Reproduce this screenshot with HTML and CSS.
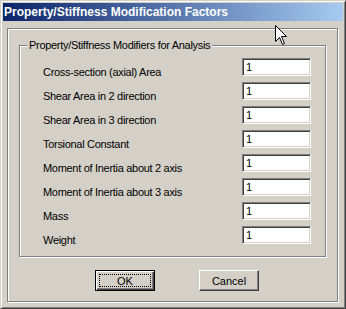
FILE: index.html
```html
<!DOCTYPE html>
<html>
<head>
<meta charset="utf-8">
<title>Property/Stiffness Modification Factors</title>
<link rel="stylesheet" href="styles.css">
</head>
<body>
<div class="window">
  <div class="titlebar"><span class="title">Property/Stiffness Modification Factors</span></div>
  <div class="client">
    <div class="etched">
      <div class="group">
        <span class="legend">Property/Stiffness Modifiers for Analysis</span>
        <div class="rows">
          <div class="row"><span class="label">Cross-section (axial) Area</span><span class="field">1</span></div>
          <div class="row"><span class="label">Shear Area in 2 direction</span><span class="field">1</span></div>
          <div class="row"><span class="label">Shear Area in 3 direction</span><span class="field">1</span></div>
          <div class="row"><span class="label">Torsional Constant</span><span class="field">1</span></div>
          <div class="row"><span class="label">Moment of Inertia about 2 axis</span><span class="field">1</span></div>
          <div class="row"><span class="label">Moment of Inertia about 3 axis</span><span class="field">1</span></div>
          <div class="row"><span class="label">Mass</span><span class="field">1</span></div>
          <div class="row"><span class="label">Weight</span><span class="field">1</span></div>
        </div>
      </div>
      <div class="buttons">
        <button class="btn default"><span class="focus">OK</span></button>
        <button class="btn"><span class="plain">Cancel</span></button>
      </div>
    </div>
  </div>
  <svg class="cursor" width="13" height="21" viewBox="0 0 13 21">
    <path d="M0.5 0.5 L0.5 16.5 L4.5 12.5 L7.5 19.5 L9.5 18.5 L6.5 11.5 L11.5 11.5 Z" fill="#fff" stroke="#000" stroke-width="1" stroke-linejoin="miter"/>
  </svg>
</div>
</body>
</html>
```
FILE: styles.css
```css
* { box-sizing: border-box; }

body {
  margin: 0;
  background: #D4D0C8;
  font-family: "Liberation Sans", Arial, sans-serif;
  font-size: 11px;
  color: #000;
}

.window {
  position: relative;
  width: 346px;
  height: 309px;
  border: 1px solid;
  border-color: #D4D0C8 #404040 #404040 #D4D0C8;
  box-shadow: inset 1px 1px #fff, inset -1px -1px #808080;
  padding: 2px;
  background: #D4D0C8;
}

.titlebar {
  height: 18px;
  background: linear-gradient(to right, #0A246A, #A6CAF0);
  color: #fff;
  font: bold 12px "Liberation Sans", Arial, sans-serif;
  display: flex;
  align-items: center;
  padding-left: 1px;
  white-space: nowrap;
}

.client {
  padding: 7px 5px 0 4px;
}

.etched {
  border: 1px solid #808080;
  box-shadow: inset 1px 1px #fff, 1px 1px #fff;
  padding: 16px 11px 10px 11px;
}

.group {
  position: relative;
  border: 1px solid #808080;
  box-shadow: inset 1px 1px #fff, 1px 1px #fff;
  padding: 12px 14px 12px 23px;
}

.legend {
  position: absolute;
  top: -7px;
  left: 7px;
  padding: 0 2px;
  line-height: 13px;
  background: #D4D0C8;
  letter-spacing: -0.3px;
  white-space: nowrap;
}

.rows {
  display: flex;
  flex-direction: column;
  gap: 6px;
}

.row {
  display: flex;
  justify-content: space-between;
  height: 18px;
}

.label {
  line-height: 13px;
  margin-top: 8px;
  letter-spacing: -0.3px;
  white-space: nowrap;
}

.field {
  width: 69px;
  height: 18px;
  background: #fff;
  border: 1px solid;
  border-color: #808080 #fff #fff #808080;
  box-shadow: inset 1px 1px #404040, inset -1px -1px #D4D0C8;
  padding: 2px 0 0 3px;
  line-height: 13px;
}

.buttons {
  display: flex;
  gap: 44px;
  padding-left: 76px;
  margin-top: 13px;
}

.btn {
  width: 60px;
  height: 21px;
  padding: 0;
  margin: 0;
  background: #D4D0C8;
  border: 1px solid;
  border-color: #fff #404040 #404040 #fff;
  box-shadow: inset -1px -1px #808080;
  font: 11px "Liberation Sans", Arial, sans-serif;
  color: #000;
  display: flex;
  align-items: stretch;
}

.btn.default {
  border-color: #000;
  box-shadow: inset 1px 1px #fff, inset -1px -1px #404040, inset -2px -2px #808080;
  padding: 3px;
}

.focus {
  flex: 1;
  border: 1px dotted #000;
  display: flex;
  align-items: center;
  justify-content: center;
}

.plain {
  flex: 1;
  display: flex;
  align-items: center;
  justify-content: center;
}

.cursor {
  position: absolute;
  left: 274px;
  top: 24px;
}
```
